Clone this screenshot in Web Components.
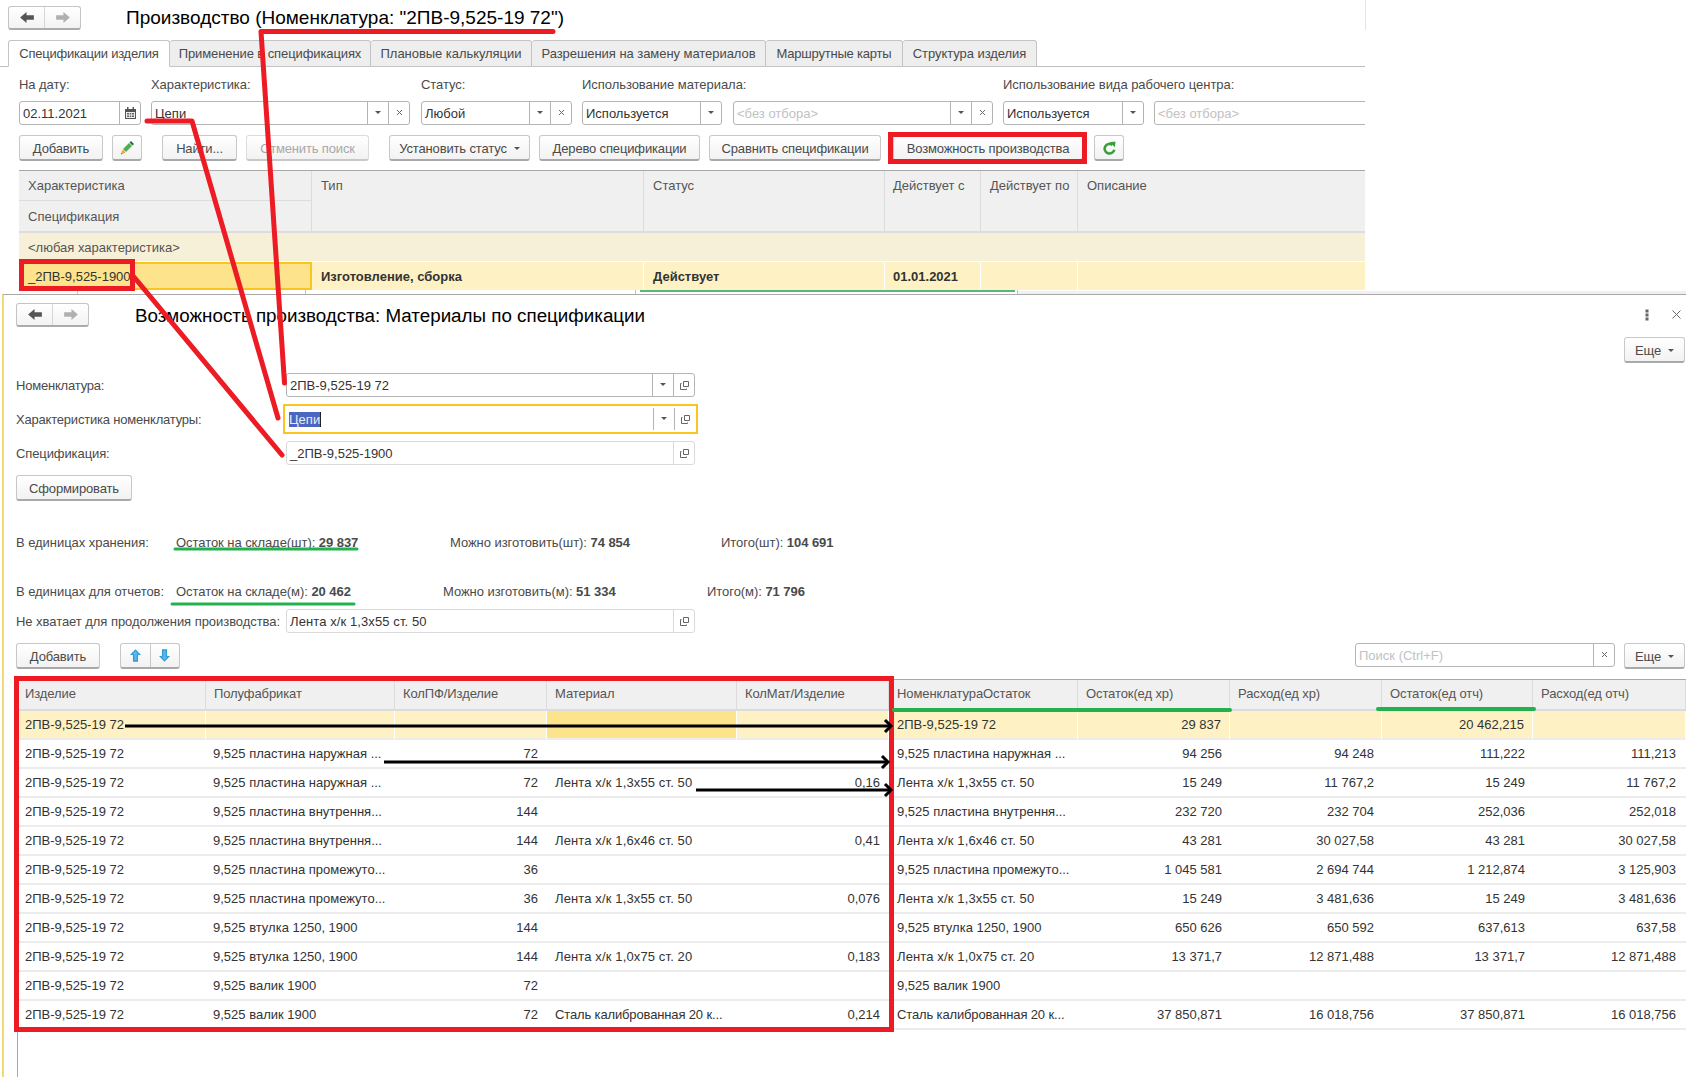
<!DOCTYPE html>
<html lang="ru">
<head>
<meta charset="utf-8">
<title>Возможность производства</title>
<style>
    html, body { margin: 0; padding: 0; background: #fff; }
    body { width: 1686px; height: 1077px; position: relative; overflow: hidden; font: 13px "Liberation Sans", Arial, sans-serif; color: #4a4a4a; }
</style>
</head>
<body>

<ui-window style="left:0;top:0;width:1365px;height:294px">
    <ui-head style="padding:6px 0 0 8px" title-gap="45" title-size="19">Производство (Номенклатура: "2ПВ-9,525-19 72")</ui-head>
    <ui-tabs style="margin-top:10px">
        <ui-tab active style="width:162px;letter-spacing:-.25px">Спецификации изделия</ui-tab>
        <ui-tab style="width:201px;letter-spacing:-.1px">Применение в спецификациях</ui-tab>
        <ui-tab style="width:161px;letter-spacing:-.05px">Плановые калькуляции</ui-tab>
        <ui-tab style="width:234px;letter-spacing:-.05px">Разрешения на замену материалов</ui-tab>
        <ui-tab style="width:137px;letter-spacing:-.2px">Маршрутные карты</ui-tab>
        <ui-tab style="width:134px;letter-spacing:-.05px">Структура изделия</ui-tab>
    </ui-tabs>
    <ui-filters>
        <ui-filter label="На дату:" style="width:122px"><ui-field value="02.11.2021" buttons="cal"></ui-field></ui-filter>
        <ui-filter label="Характеристика:" style="width:259px;margin-left:10px"><ui-field value="Цепи" buttons="drop clear"></ui-field></ui-filter>
        <ui-filter label="Статус:" style="width:151px;margin-left:11px"><ui-field value="Любой" buttons="drop clear"></ui-field></ui-filter>
        <ui-filter label="Использование материала:" style="width:140px;margin-left:10px"><ui-field value="Используется" buttons="drop"></ui-field></ui-filter>
        <ui-filter label="&nbsp;" style="width:260px;margin-left:11px"><ui-field placeholder="&lt;без отбора&gt;" buttons="drop clear"></ui-field></ui-filter>
        <ui-filter label="Использование вида рабочего центра:" style="width:141px;margin-left:10px"><ui-field value="Используется" buttons="drop"></ui-field></ui-filter>
        <ui-filter label="&nbsp;" style="width:230px;margin-left:10px"><ui-field placeholder="&lt;без отбора&gt;" buttons=""></ui-field></ui-filter>
    </ui-filters>
    <ui-toolbar style="margin:10px 0 0 19px">
        <ui-button style="width:84px">Добавить</ui-button>
        <ui-button icon="pencil" style="width:30px;margin-left:9px"></ui-button>
        <ui-button style="width:75px;margin-left:20px">Найти...</ui-button>
        <ui-button disabled style="width:123px;margin-left:9px">Отменить поиск</ui-button>
        <ui-button menu style="width:141px;margin-left:20px">Установить статус</ui-button>
        <ui-button style="width:161px;margin-left:9px">Дерево спецификации</ui-button>
        <ui-button style="width:172px;margin-left:9px">Сравнить спецификации</ui-button>
        <ui-button style="width:190px;margin-left:12px">Возможность производства</ui-button>
        <ui-button icon="refresh" style="width:30px;margin-left:11px"></ui-button>
    </ui-toolbar>
    <ui-spec-table style="margin:9px 0 0 19px"></ui-spec-table>
</ui-window>

<ui-window second style="left:2px;top:294px;width:1684px;height:783px">
    <ui-head style="padding:8px 0 0 12px" title-gap="46" title-size="18.8" title-drop="2" close>Возможность производства: Материалы по спецификации</ui-head>
    <ui-toolbar style="margin-top:10px;justify-content:flex-end;padding-right:1px">
        <ui-button menu style="width:61px">Еще</ui-button>
    </ui-toolbar>
    <ui-form-row label="Номенклатура:" style="margin-top:10px;letter-spacing:-.2px"><ui-field value="2ПВ-9,525-19 72" buttons="drop copy" style="letter-spacing:0"></ui-field></ui-form-row>
    <ui-form-row label="Характеристика номенклатуры:" style="margin-top:7px;letter-spacing:-.2px"><ui-field focused value="Цепи" buttons="drop copy" style="letter-spacing:0"></ui-field></ui-form-row>
    <ui-form-row label="Спецификация:" style="margin-top:7px;letter-spacing:-.1px"><ui-field soft value="_2ПВ-9,525-1900" buttons="copy" style="letter-spacing:0"></ui-field></ui-form-row>
    <ui-toolbar style="margin:10px 0 0 12px">
        <ui-button style="width:116px">Сформировать</ui-button>
    </ui-toolbar>
    <ui-stats cols="160px 274px 271px auto" style="margin-top:34px">
        <span>В единицах хранения:</span>
        <span>Остаток на складе(шт): <b>29 837</b></span>
        <span>Можно изготовить(шт): <b>74 854</b></span>
        <span>Итого(шт): <b>104 691</b></span>
    </ui-stats>
    <ui-stats cols="160px 267px 264px auto" style="margin-top:33px">
        <span>В единицах для отчетов:</span>
        <span>Остаток на складе(м): <b>20 462</b></span>
        <span>Можно изготовить(м): <b>51 334</b></span>
        <span>Итого(м): <b>71 796</b></span>
    </ui-stats>
    <ui-form-row label="Не хватает для продолжения производства:" style="margin-top:9px;letter-spacing:-.05px"><ui-field soft value="Лента х/к 1,3х55 ст. 50" buttons="copy" style="letter-spacing:.1px"></ui-field></ui-form-row>
    <ui-toolbar style="margin:10px 1px 0 12px">
        <ui-button style="width:84px">Добавить</ui-button>
        <ui-button-pair style="margin-left:20px"></ui-button-pair>
        <ui-field placeholder="Поиск (Ctrl+F)" buttons="clear" style="width:260px;margin-left:auto;height:24px"></ui-field>
        <ui-button menu style="width:61px;margin:0 0 0 9px">Еще</ui-button>
    </ui-toolbar>
    <ui-materials-table style="margin-top:10px"></ui-materials-table>
    <ui-table-tail></ui-table-tail>
</ui-window>

<ui-annotations></ui-annotations>

<script>
    const ICONS = {
        back: '<svg width="14" height="11" viewBox="0 0 15 12"><path d="M0 6 L7 0 V3.5 H15 V8.5 H7 V12 Z" fill="#555"/></svg>',
        forward: '<svg width="14" height="11" viewBox="0 0 15 12"><path d="M15 6 L8 0 V3.5 H0 V8.5 H8 V12 Z" fill="#b0b0b0"/></svg>',
        drop: '<svg width="6" height="3" viewBox="0 0 6 3"><path d="M0 0 H6 L3 3 Z" fill="#555"/></svg>',
        clear: '<svg width="7" height="7" viewBox="0 0 7 7"><path d="M1 1 L6 6 M6 1 L1 6" stroke="#666" stroke-width="1" fill="none"/></svg>',
        cal: '<svg width="11" height="12" viewBox="0 0 11 12"><path d="M0 2 H11 V12 H0 Z" fill="#555"/><path d="M2 0 H3.5 V3 H2 Z M7.5 0 H9 V3 H7.5 Z" fill="#555"/><path d="M1 5 H10 V11 H1 Z" fill="#eee"/><path d="M2 6 H4 V7.5 H2 Z M4.7 6 H6.3 V7.5 H4.7 Z M7 6 H9 V7.5 H7 Z M2 8.5 H4 V10 H2 Z M4.7 8.5 H6.3 V10 H4.7 Z M7 8.5 H9 V10 H7 Z" fill="#666"/></svg>',
        copy: '<svg width="9" height="9" viewBox="0 0 9 9"><path d="M3.5 0.5 H8.5 V5.5 H3.5 Z" fill="none" stroke="#666"/><path d="M1.5 2.5 H0.5 V8.5 H6.5 V7.5" fill="none" stroke="#666"/></svg>',
        pencil: '<svg width="14" height="14" viewBox="0 0 14 14"><path d="M9.5 1.5 L11 0 L14 3 L12.5 4.5 Z" fill="#2d6a3d"/><path d="M3 8 L9 2 L12 5 L6 11 Z" fill="#4caf50"/><path d="M2.5 8.5 L5.5 11.5 L1 13.5 Z" fill="#e8a33d"/><path d="M1.4 12 L2.2 12.9 L1 13.5 Z" fill="#444"/></svg>',
        refresh: '<svg width="13" height="14" viewBox="0 0 15 16"><path d="M11 4.4 A5.6 5.6 0 1 0 13 10" fill="none" stroke="#3a9f3a" stroke-width="3"/><path d="M7.6 1.4 L14.4 0.4 L13.8 7.2 Z" fill="#3a9f3a"/></svg>',
        up: '<svg width="11" height="13" viewBox="0 0 13 15"><path d="M6.5 0 L13 7 H9.5 V15 H3.5 V7 H0 Z" fill="#2e9bd6"/><path d="M6.5 2 L10 6 H8 V13 H5 V6 H3 Z" fill="#5cb8e8"/></svg>',
        down: '<svg width="11" height="13" viewBox="0 0 13 15"><path d="M6.5 15 L13 8 H9.5 V0 H3.5 V8 H0 Z" fill="#2e9bd6"/><path d="M6.5 13 L10 9 H8 V2 H5 V9 H3 Z" fill="#5cb8e8"/></svg>'
    };

    class UiWindow extends HTMLElement {
        constructor() {
            super();
            this.attachShadow({mode: 'open'}).innerHTML = `
                <style>
                    :host { display: block; position: absolute; background: #fff; overflow: hidden; box-sizing: border-box; }
                    :host([second]) { border-top: 1px solid #a9a9a9; border-left: 2px solid #f0d87a; }
                </style>
                <slot></slot>`;
        }
    }

    class UiHead extends HTMLElement {
        connectedCallback() {
            if (this.shadowRoot) return;
            const gap = this.getAttribute('title-gap') || 40;
            const size = this.getAttribute('title-size') || 19;
            const drop = this.getAttribute('title-drop') || 0;
            const close = this.hasAttribute('close') ? `
                <span class="tools">
                    <svg width="4" height="12" viewBox="0 0 4 12"><path d="M0.5 0.5 h3 v3 h-3 Z M0.5 4.5 h3 v3 h-3 Z M0.5 8.5 h3 v3 h-3 Z" fill="#666"/></svg>
                    <svg width="9" height="9" viewBox="0 0 9 9"><path d="M0.5 0.5 L8.5 8.5 M8.5 0.5 L0.5 8.5" stroke="#666" fill="none"/></svg>
                </span>` : '';
            this.attachShadow({mode: 'open'}).innerHTML = `
                <style>
                    :host { display: flex; align-items: center; box-sizing: content-box; height: 24px; }
                    .nav { display: flex; width: 73px; height: 24px; box-sizing: border-box; border: 1px solid #c4c4c4; border-bottom: 2px solid #ababab; border-radius: 3px; background: linear-gradient(#fff, #f3f3f3); }
                    .nav span { flex: 1; display: flex; align-items: center; justify-content: center; }
                    .nav span + span { border-left: 1px solid #d6d6d6; }
                    h1 { margin: ${drop}px 0 0 ${gap}px; font: 400 ${size}px "Liberation Sans", Arial, sans-serif; color: #000; white-space: nowrap; }
                    .tools { margin-left: auto; display: flex; gap: 23px; align-items: center; padding-right: 5px; margin-top: -1px; }
                </style>
                <div class="nav"><span>${ICONS.back}</span><span>${ICONS.forward}</span></div>
                <h1><slot></slot></h1>${close}`;
        }
    }

    class UiTabs extends HTMLElement {
        constructor() {
            super();
            this.attachShadow({mode: 'open'}).innerHTML = `
                <style>
                    :host { display: flex; height: 27px; box-sizing: border-box; padding-left: 8px; border-bottom: 1px solid #bdbdbd; }
                </style>
                <slot></slot>`;
        }
    }

    class UiTab extends HTMLElement {
        constructor() {
            super();
            this.attachShadow({mode: 'open'}).innerHTML = `
                <style>
                    :host { display: flex; align-items: center; justify-content: center; box-sizing: border-box; height: 27px; background: #eee; border: 1px solid #c4c4c4; border-left: 0; border-radius: 3px 3px 0 0; white-space: nowrap; color: #4a4a4a; }
                    :host([active]) { background: #fff; border-left: 1px solid #c4c4c4; border-bottom-color: #fff; }
                </style>
                <slot></slot>`;
        }
    }

    class UiFilters extends HTMLElement {
        constructor() {
            super();
            this.attachShadow({mode: 'open'}).innerHTML = `
                <style>
                    :host { display: flex; padding: 10px 0 0 19px; white-space: nowrap; }
                </style>
                <slot></slot>`;
        }
    }

    class UiFilter extends HTMLElement {
        connectedCallback() {
            if (this.shadowRoot) return;
            this.attachShadow({mode: 'open'}).innerHTML = `
                <style>
                    :host { display: block; flex: none; }
                    label { display: block; height: 16px; line-height: 16px; margin-bottom: 8px; white-space: nowrap; color: #4a4a4a; letter-spacing: -.05px; }
                </style>
                <label>${this.getAttribute('label')}</label>
                <slot></slot>`;
        }
    }

    class UiField extends HTMLElement {
        connectedCallback() {
            if (this.shadowRoot) return;
            const value = this.getAttribute('value');
            const placeholder = this.getAttribute('placeholder') || '';
            const buttons = (this.getAttribute('buttons') || '').split(' ').filter(Boolean);
            const focused = this.hasAttribute('focused');
            const text = value
                ? (focused ? `<span class="sel">${value}</span>` : value)
                : `<span class="ph">${placeholder}</span>`;
            this.attachShadow({mode: 'open'}).innerHTML = `
                <style>
                    :host { display: flex; box-sizing: border-box; height: 24px; background: #fff; border: 1px solid #b4b4b4; border-radius: 3px; color: #333; }
                    :host([soft]) { border-color: #dadada; }
                    :host([focused]) { border: 2px solid #fbc520; border-radius: 0; height: 30px; margin: 0 -3px; padding: 2px 1px; }
                    .val { flex: 1; min-width: 0; display: flex; align-items: center; padding-left: 3px; white-space: nowrap; overflow: hidden; }
                    .ph { color: #c2c2c2; }
                    .sel { background: #4a66c0; color: #e8ecf8; border-right: 1px solid #222; }
                    .btn { flex: none; width: 21px; display: flex; align-items: center; justify-content: center; border-left: 1px solid #b4b4b4; box-sizing: border-box; }
                    :host([soft]) .btn { border-left-color: #dadada; }
                    .btn.clear svg, .btn.drop svg { margin-top: -2px; }
                </style>
                <div class="val">${text}</div>
                ${buttons.map(b => `<span class="btn ${b}">${ICONS[b]}</span>`).join('')}`;
        }
    }

    class UiButton extends HTMLElement {
        connectedCallback() {
            if (this.shadowRoot) return;
            const icon = this.getAttribute('icon');
            const arrow = this.hasAttribute('menu') ? `<span class="arrow">${ICONS.drop}</span>` : '';
            this.attachShadow({mode: 'open'}).innerHTML = `
                <style>
                    :host { display: inline-flex; flex: none; align-items: center; justify-content: center; box-sizing: border-box; height: 26px; padding-top: 1px; white-space: nowrap; letter-spacing: -.15px; background: linear-gradient(#fff, #f2f2f2); border: 1px solid #c8c8c8; border-bottom: 2px solid #a9a9a9; border-radius: 3px; color: #4a4a4a; }
                    :host([disabled]) { color: #a8a8a8; border-color: #dcdcdc; border-bottom-color: #c8c8c8; }
                    :host([icon]) { padding-top: 0; }
                    .arrow { display: inline-flex; margin-left: 7px; }
                    svg { display: block; }
                </style>
                ${icon ? ICONS[icon] : '<slot></slot>'}${arrow}`;
        }
    }

    class UiButtonPair extends HTMLElement {
        constructor() {
            super();
            this.attachShadow({mode: 'open'}).innerHTML = `
                <style>
                    :host { display: flex; flex: none; box-sizing: border-box; width: 60px; height: 26px; background: linear-gradient(#fff, #f2f2f2); border: 1px solid #c8c8c8; border-bottom: 2px solid #a9a9a9; border-radius: 3px; }
                    span { flex: 1; display: flex; align-items: center; justify-content: center; }
                    span + span { border-left: 1px solid #c8c8c8; }
                </style>
                <span>${ICONS.up}</span><span>${ICONS.down}</span>`;
        }
    }

    class UiToolbar extends HTMLElement {
        constructor() {
            super();
            this.attachShadow({mode: 'open'}).innerHTML = `
                <style>
                    :host { display: flex; align-items: flex-start; }
                </style>
                <slot></slot>`;
        }
    }

    class UiFormRow extends HTMLElement {
        connectedCallback() {
            if (this.shadowRoot) return;
            this.attachShadow({mode: 'open'}).innerHTML = `
                <style>
                    :host { display: grid; grid-template-columns: 270px 409px; align-items: center; padding-left: 12px; }
                    label { white-space: nowrap; color: #4a4a4a; }
                </style>
                <label>${this.getAttribute('label')}</label>
                <slot></slot>`;
        }
    }

    class UiStats extends HTMLElement {
        connectedCallback() {
            if (this.shadowRoot) return;
            this.attachShadow({mode: 'open'}).innerHTML = `
                <style>
                    :host { display: grid; grid-template-columns: ${this.getAttribute('cols')}; height: 16px; line-height: 16px; padding-left: 12px; white-space: nowrap; letter-spacing: -.05px; }
                    ::slotted(span) { color: #4a4a4a; }
                </style>
                <slot></slot>`;
        }
    }

    class UiSpecTable extends HTMLElement {
        constructor() {
            super();
            this.attachShadow({mode: 'open'}).innerHTML = `
                <style>
                    :host { display: block; width: 1346px; border-top: 1px solid #a9a9a9; }
                    .grid { display: grid; grid-template-columns: 293px 332px 241px 96px 97px 300px; }
                    .h { background: #f0f0f0; color: #555; padding: 7px 0 0 9px; box-sizing: border-box; white-space: nowrap; border-right: 1px solid #dcdcdc; border-bottom: 2px solid #dcdcdc; }
                    .h.tall { grid-row: span 2; }
                    .h.a { height: 30px; border-bottom-width: 1px; }
                    .h.b { height: 32px; padding-top: 8px; }
                    .h.p8, .c.p8 { padding-left: 8px; }
                    .any { grid-column: 1 / -1; height: 28px; line-height: 30px; padding-left: 9px; background: #f7f0d8; color: #555; border-bottom: 1px solid #fff; }
                    .c { height: 28px; line-height: 30px; padding-left: 9px; box-sizing: border-box; background: #fef2c4; border-right: 1px solid #fff; color: #333; font-weight: 700; }
                    .c.on { background: #fde38c; border: 2px solid #fbc520; line-height: 26px; font-weight: 400; padding-left: 7px; }
                    .tail { display: grid; grid-template-columns: 59px 228px 330px 382px 1fr; height: 5px; }
                    .tail span { border-right: 1px solid #c4c4c4; }
                    .tail span:last-child { border: 0; }
                </style>
                <div class="grid">
                    <div class="h a">Характеристика</div>
                    <div class="h tall">Тип</div><div class="h tall">Статус</div><div class="h tall p8">Действует с</div><div class="h tall">Действует по</div><div class="h tall">Описание</div>
                    <div class="h b" style="grid-column:1">Спецификация</div>
                    <div class="any">&lt;любая характеристика&gt;</div>
                    <div class="c on">_2ПВ-9,525-1900</div><div class="c">Изготовление, сборка</div><div class="c">Действует</div><div class="c p8">01.01.2021</div><div class="c"></div><div class="c"></div>
                </div>
                <div class="tail"><span></span><span></span><span></span><span></span><span></span></div>`;
        }
    }

    const ITEM = '2ПВ-9,525-19 72';
    const PLATE_OUT = '9,525 пластина наружная ...';
    const PLATE_IN = '9,525 пластина внутрення...';
    const PLATE_MID = '9,525 пластина промежуто...';
    const SLEEVE = '9,525 втулка 1250, 1900';
    const ROLLER = '9,525 валик 1900';
    const STEEL = 'Сталь калиброванная 20 к...';
    const MATERIAL_ROWS = [
        [ITEM, '', '', '', '', ITEM, '29 837', '', '20 462,215', ''],
        [ITEM, PLATE_OUT, '72', '', '', PLATE_OUT, '94 256', '94 248', '111,222', '111,213'],
        [ITEM, PLATE_OUT, '72', 'Лента х/к 1,3х55 ст. 50', '0,16', 'Лента х/к 1,3х55 ст. 50', '15 249', '11 767,2', '15 249', '11 767,2'],
        [ITEM, PLATE_IN, '144', '', '', PLATE_IN, '232 720', '232 704', '252,036', '252,018'],
        [ITEM, PLATE_IN, '144', 'Лента х/к 1,6х46 ст. 50', '0,41', 'Лента х/к 1,6х46 ст. 50', '43 281', '30 027,58', '43 281', '30 027,58'],
        [ITEM, PLATE_MID, '36', '', '', PLATE_MID, '1 045 581', '2 694 744', '1 212,874', '3 125,903'],
        [ITEM, PLATE_MID, '36', 'Лента х/к 1,3х55 ст. 50', '0,076', 'Лента х/к 1,3х55 ст. 50', '15 249', '3 481,636', '15 249', '3 481,636'],
        [ITEM, SLEEVE, '144', '', '', SLEEVE, '650 626', '650 592', '637,613', '637,58'],
        [ITEM, SLEEVE, '144', 'Лента х/к 1,0х75 ст. 20', '0,183', 'Лента х/к 1,0х75 ст. 20', '13 371,7', '12 871,488', '13 371,7', '12 871,488'],
        [ITEM, ROLLER, '72', '', '', ROLLER, '', '', '', ''],
        [ITEM, ROLLER, '72', STEEL, '0,214', STEEL, '37 850,871', '16 018,756', '37 850,871', '16 018,756']
    ];
    const MATERIAL_HEAD = ['Изделие', 'Полуфабрикат', 'КолПФ/Изделие', 'Материал', 'КолМат/Изделие', 'НоменклатураОстаток', 'Остаток(ед хр)', 'Расход(ед хр)', 'Остаток(ед отч)', 'Расход(ед отч)'];
    const RIGHT_COLS = [2, 4, 6, 7, 8, 9];

    class UiMaterialsTable extends HTMLElement {
        constructor() {
            super();
            const head = MATERIAL_HEAD.map(h => `<div class="h">${h}</div>`).join('');
            const rows = MATERIAL_ROWS.map((row, r) => row.map((v, c) => {
                const cls = ['c', 'col' + c];
                if (RIGHT_COLS.includes(c)) cls.push('r');
                if (r === 0) cls.push('cur');
                if (r === 0 && c === 3) cls.push('on');
                if (v.startsWith('Лента')) cls.push('wide');
                if (v === STEEL) cls.push('tight');
                return `<div class="${cls.join(' ')}">${v}</div>`;
            }).join('')).join('');
            this.attachShadow({mode: 'open'}).innerHTML = `
                <style>
                    :host { display: block; margin-left: 13px; border-top: 1px solid #a9a9a9; }
                    .grid { display: grid; grid-template-columns: 189px 189px 152px 190px 152px 189px 152px 152px 151px 153px; }
                    .h { height: 31px; box-sizing: border-box; line-height: 28px; padding-left: 8px; background: #f0f0f0; color: #555; border-right: 1px solid #dcdcdc; border-bottom: 2px solid #dcdcdc; letter-spacing: -.1px; }
                    .c { height: 29px; box-sizing: border-box; line-height: 27px; padding: 0 8px; color: #333; border-bottom: 2px solid #ececec; white-space: nowrap; overflow: hidden; }
                    .r { text-align: right; }
                    .wide { letter-spacing: .13px; }
                    .tight { letter-spacing: -.14px; }
                    .col2, .col4 { padding-right: 9px; }
                    .col9 { padding-right: 10px; }
                    .col1 { padding-left: 7px; }
                    .cur { background: #fef2c4; border-right: 1px solid #fff; }
                    .on { background: #fde38c; }
                </style>
                <div class="grid">${head}${rows}</div>`;
        }
    }

    class UiTableTail extends HTMLElement {
        constructor() {
            super();
            this.attachShadow({mode: 'open'}).innerHTML = `
                <style>
                    :host { display: block; margin-left: 13px; width: 1px; height: 60px; background: #a9a9a9; }
                </style>`;
        }
    }

    class UiAnnotations extends HTMLElement {
        constructor() {
            super();
            const RED = '#ed1c24', GREEN = '#22b14c';
            const arrow = (x1, x2, y) => `<path d="M${x1} ${y} H${x2 - 2}" stroke="#000" stroke-width="3"/><path d="M${x2 - 7} ${y - 6} L${x2 - 1} ${y} L${x2 - 7} ${y + 6}" stroke="#000" stroke-width="3" fill="none"/>`;
            const box = (x1, y1, x2, y2, w) => `<rect x="${x1 + w / 2}" y="${y1 + w / 2}" width="${x2 - x1 - w}" height="${y2 - y1 - w}" fill="none" stroke="${RED}" stroke-width="${w}"/>`;
            const green = (x1, x2, y, w = 3) => `<path d="M${x1} ${y} H${x2}" stroke="${GREEN}" stroke-width="${w}" stroke-linecap="round"/>`;
            this.attachShadow({mode: 'open'}).innerHTML = `
                <style>
                    :host { display: block; position: absolute; left: 0; top: 0; width: 1686px; height: 1077px; pointer-events: none; }
                    svg { display: block; }
                </style>
                <svg width="1686" height="1077" viewBox="0 0 1686 1077">
                    <path d="M1018 292.5 H1686" stroke="#f0f0f0" stroke-width="3"/>
                    <path d="M1365.5 0 V30" stroke="#e4e4e4"/>
                    <path d="M640 291 H1015" stroke="#1f9d55" stroke-width="1.5"/>
                    <g fill="none" stroke="${RED}" stroke-width="5" stroke-linecap="round" stroke-linejoin="round">
                        <path d="M553 31.5 H261 L284.5 383"/>
                        <path d="M147 121 H192 L278 418"/>
                        <path d="M134 277 L282 455"/>
                    </g>
                    ${box(19, 259, 135, 291, 5)}
                    ${box(888, 132, 1087, 164, 5)}
                    ${box(14, 676, 894, 1032, 5)}
                    ${green(175, 357, 549)}
                    ${green(172, 354, 604)}
                    ${green(894, 1230, 710, 4)}
                    ${green(1378, 1534, 709, 4)}
                    ${arrow(125, 892, 726)}
                    ${arrow(384, 889, 762)}
                    ${arrow(696, 892, 790)}
                </svg>`;
        }
    }

    customElements.define('ui-window', UiWindow);
    customElements.define('ui-head', UiHead);
    customElements.define('ui-tabs', UiTabs);
    customElements.define('ui-tab', UiTab);
    customElements.define('ui-filters', UiFilters);
    customElements.define('ui-filter', UiFilter);
    customElements.define('ui-field', UiField);
    customElements.define('ui-button', UiButton);
    customElements.define('ui-button-pair', UiButtonPair);
    customElements.define('ui-toolbar', UiToolbar);
    customElements.define('ui-form-row', UiFormRow);
    customElements.define('ui-stats', UiStats);
    customElements.define('ui-spec-table', UiSpecTable);
    customElements.define('ui-materials-table', UiMaterialsTable);
    customElements.define('ui-table-tail', UiTableTail);
    customElements.define('ui-annotations', UiAnnotations);
</script>
</body>
</html>
